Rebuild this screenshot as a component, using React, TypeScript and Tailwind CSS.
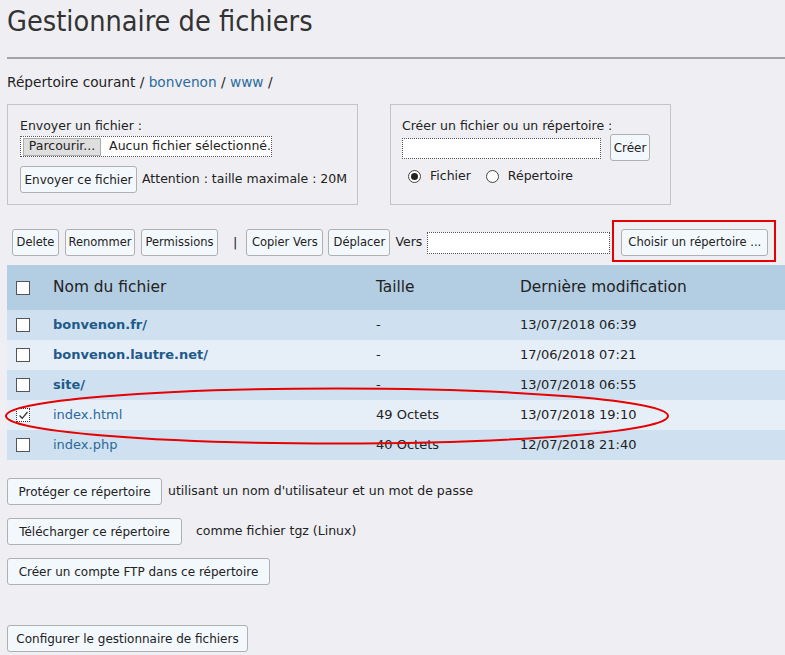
import React from "react";

const rows = [
  { name: "bonvenon.fr/", dir: true, size: "-", date: "13/07/2018 06:39", checked: false },
  { name: "bonvenon.lautre.net/", dir: true, size: "-", date: "17/06/2018 07:21", checked: false },
  { name: "site/", dir: true, size: "-", date: "13/07/2018 06:55", checked: false },
  { name: "index.html", dir: false, size: "49 Octets", date: "13/07/2018 19:10", checked: true },
  { name: "index.php", dir: false, size: "40 Octets", date: "12/07/2018 21:40", checked: false },
];

function Btn({ children, className = "" }: { children: React.ReactNode; className?: string }) {
  return (
    <button
      className={`h-[27px] rounded-[3px] border border-[#b0b0b0] bg-[#f3f8fd] text-[#222] leading-none whitespace-nowrap ${className}`}
    >
      {children}
    </button>
  );
}

function Box({ checked = false }: { checked?: boolean }) {
  return (
    <span
      className={`flex h-[14px] w-[14px] items-center justify-center bg-white ${
        checked ? "border border-dotted border-[#333]" : "border border-[#555]"
      }`}
    >
      {checked && (
        <svg width="11" height="11" viewBox="0 0 11 11">
          <path d="M1.5 5.5 L4.2 8.3 L9.5 2" fill="none" stroke="#333" strokeWidth="1.3" />
        </svg>
      )}
    </span>
  );
}

function Radio({ checked = false }: { checked?: boolean }) {
  return (
    <span className="flex h-[13px] w-[13px] items-center justify-center rounded-full border border-[#444] bg-white">
      {checked && <span className="h-[7px] w-[7px] rounded-full bg-[#222]" />}
    </span>
  );
}

export default function App() {
  return (
    <div className="min-h-screen bg-[#efeff3] font-['DejaVu_Sans',sans-serif] text-[12.5px] text-[#222]">
      <div className="pl-[7px]">
        <h1 className="pt-[3px] font-['DejaVu_Sans_Condensed','DejaVu_Sans',sans-serif] text-[28.6px] leading-[36px] text-[#333]">
          Gestionnaire de fichiers
        </h1>
        <div className="mt-[18px] h-[2px] bg-[#a4a4a4]" />

        <p className="mt-[14px] text-[13.7px] leading-[18px]">
          Répertoire courant / <span className="text-[#2b6c9c]">bonvenon</span> /{" "}
          <span className="text-[#2b6c9c]">www</span> /
        </p>

        {/* upload + create */}
        <div className="mt-[13px] flex gap-[32px]">
          <div className="h-[101px] w-[351px] border border-[#c4c4c4] pl-[12px] pt-[12px]">
            <p className="leading-[17px]">Envoyer un fichier :</p>
            <div className="mt-[2px] flex h-[21px] w-[252px] items-center border border-dotted border-[#555] bg-white">
              <span className="ml-[2px] flex h-[18px] w-[80px] items-center justify-center border border-[#adadad] bg-[#dedede]">
                Parcourir...
              </span>
              <span className="ml-[8px] whitespace-nowrap">Aucun fichier sélectionné.</span>
            </div>
            <div className="mt-[9px] flex items-center gap-[5px]">
              <Btn className="w-[117px] text-[12px]">Envoyer ce fichier</Btn>
              <span className="whitespace-nowrap">Attention : taille maximale : 20M</span>
            </div>
          </div>

          <div className="h-[101px] w-[281px] border border-[#c4c4c4] pl-[11px] pt-[12px]">
            <p className="leading-[17px]">Créer un fichier ou un répertoire :</p>
            <div className="flex items-center">
              <div className="mt-[2px] h-[21px] w-[199px] border border-dotted border-[#555] bg-white" />
              <Btn className="ml-[9px] w-[40px] text-[12px]">Créer</Btn>
            </div>
            <div className="mt-[6px] flex items-center pl-[6px]">
              <Radio checked />
              <span className="ml-[9px]">Fichier</span>
              <span className="ml-[15px]">
                <Radio />
              </span>
              <span className="ml-[9px]">Répertoire</span>
            </div>
          </div>
        </div>

        {/* toolbar */}
        <div className="mt-[24px] flex items-center pl-[5px] text-[11.5px]">
          <Btn className="w-[47px]">Delete</Btn>
          <Btn className="ml-[6px] w-[70px]">Renommer</Btn>
          <Btn className="ml-[6px] w-[77px]">Permissions</Btn>
          <span className="ml-[15px] text-[13px]">|</span>
          <Btn className="ml-[9px] w-[77px]">Copier Vers</Btn>
          <Btn className="ml-[5px] w-[62px]">Déplacer</Btn>
          <span className="ml-[5px] text-[12.5px]">Vers</span>
          <div className="ml-[5px] h-[22px] w-[183px] border border-dotted border-[#555] bg-white" />
          <div className="relative ml-[11px]">
            <Btn className="w-[147px]">Choisir un répertoire ...</Btn>
            <span className="pointer-events-none absolute -top-[9px] -bottom-[6px] -left-[9px] -right-[8px] border-2 border-[#e60000]" />
          </div>
        </div>

        {/* table */}
        <div className="relative mt-[9px]">
          <div className="grid h-[45px] grid-cols-[46px_323px_144px_1fr] items-center bg-[#b3cde2] text-[15.4px]">
            <span className="pl-[9px]">
              <Box />
            </span>
            <span>Nom du fichier</span>
            <span>Taille</span>
            <span>Dernière modification</span>
          </div>
          {rows.map((r, i) => (
            <div
              key={r.name}
              className={`grid h-[30px] grid-cols-[46px_323px_144px_1fr] items-center text-[13px] ${
                i % 2 === 0 ? "bg-[#cfe1f0]" : "bg-[#e6eef7]"
              }`}
            >
              <span className="pl-[9px]">
                <Box checked={r.checked} />
              </span>
              <span className={r.dir ? "font-bold text-[#1e5a8a]" : "text-[#2b6a99]"}>{r.name}</span>
              <span>{r.size}</span>
              <span>{r.date}</span>
            </div>
          ))}
          <svg
            className="pointer-events-none absolute left-[-6px] top-[120px]"
            width="672"
            height="62"
            viewBox="0 0 672 62"
          >
            <ellipse cx="336" cy="31" rx="331" ry="27.5" fill="none" stroke="#e60000" strokeWidth="2" />
          </svg>
        </div>

        {/* bottom actions */}
        <div className="mt-[18px] flex items-center">
          <Btn className="w-[155px] text-[12px]">Protéger ce répertoire</Btn>
          <span className="ml-[6px]">utilisant un nom d'utilisateur et un mot de passe</span>
        </div>
        <div className="mt-[13px] flex items-center">
          <Btn className="w-[175px] text-[12px]">Télécharger ce répertoire</Btn>
          <span className="ml-[14px]">comme fichier tgz (Linux)</span>
        </div>
        <div className="mt-[13px] flex items-center">
          <Btn className="w-[263px] text-[12px]">Créer un compte FTP dans ce répertoire</Btn>
        </div>
        <div className="mt-[40px] flex items-center pb-[3px]">
          <Btn className="w-[241px] text-[12px]">Configurer le gestionnaire de fichiers</Btn>
        </div>
      </div>
    </div>
  );
}
